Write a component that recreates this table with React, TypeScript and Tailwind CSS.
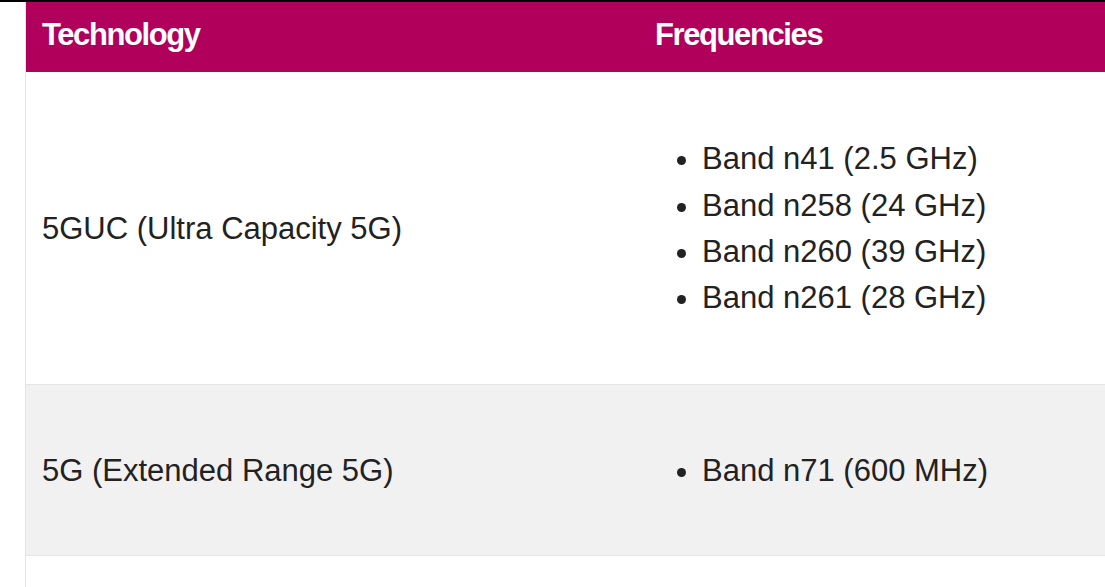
import React from "react";

const rows = [
  { tech: "5GUC (Ultra Capacity 5G)", bands: ["Band n41 (2.5 GHz)", "Band n258 (24 GHz)", "Band n260 (39 GHz)", "Band n261 (28 GHz)"], bg: "bg-white", h: "h-[313px]" },
  { tech: "5G (Extended Range 5G)", bands: ["Band n71 (600 MHz)"], bg: "bg-[#f1f1f1]", h: "h-[171px]" },
];

export default function App() {
  return (
    <div className="w-[1105px] h-[587px] overflow-hidden bg-white border-t-2 border-black" style={{ fontFamily: '"Liberation Sans", Arial, sans-serif' }}>
      <div className="ml-[25px] border-l border-[#e5e5e5] h-full w-[1200px]">
        <div className="grid grid-cols-[614px_1fr] h-[70px] bg-[#b0005c] text-white font-bold text-[31px] tracking-[-1.4px] items-center">
          <div className="pl-4 pb-[4px]">Technology</div>
          <div className="pl-[15px] pb-[4px]">Frequencies</div>
        </div>
        {rows.map((r, i) => (
          <div key={i} className={`grid grid-cols-[614px_1fr] items-center ${r.bg} ${r.h} border-b border-[#e5e5e5] text-[#222] text-[31px] leading-[46.4px]`}>
            <div className="pl-4 pt-[2px]">{r.tech}</div>
            <ul className="list-disc pl-[62px] m-0 pt-[2px]">
              {r.bands.map((b) => (
                <li key={b}>{b}</li>
              ))}
            </ul>
          </div>
        ))}
      </div>
    </div>
  );
}
